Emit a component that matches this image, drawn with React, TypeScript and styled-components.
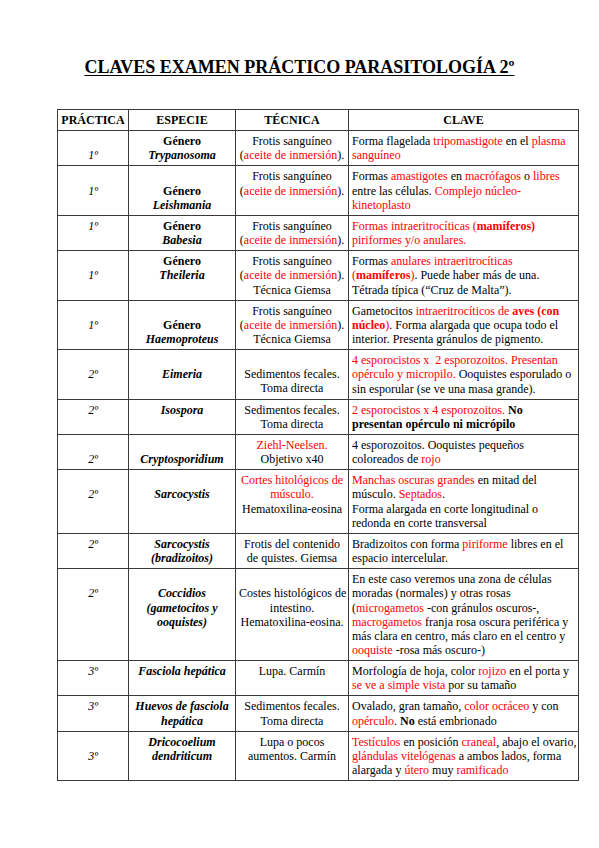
import React from 'react';
import styled, { createGlobalStyle } from 'styled-components';

const GlobalStyle = createGlobalStyle`
  html, body {
    margin: 0;
    padding: 0;
    background: #ffffff;
  }
  body {
    font-family: 'Liberation Serif', 'Times New Roman', serif;
    color: #000000;
  }
`;

const LINE = 14.15;

const Page = styled.div`
  width: 599px;
  min-height: 848px;
  padding-top: 57px;
  box-sizing: border-box;
`;

const Title = styled.h1`
  margin: 0 0 31px;
  text-align: center;
  font-size: 18px;
  font-weight: bold;
  text-decoration: underline;
  text-underline-offset: 2px;
`;

const Table = styled.table`
  margin-left: 57px;
  width: 521px;
  border-collapse: collapse;
  table-layout: fixed;
  font-size: 12px;
  line-height: ${LINE}px;
`;

const HeadCell = styled.th`
  border: 1px solid #3a3a3a;
  padding: 3px 2px;
  font-weight: bold;
  text-align: center;
  vertical-align: middle;
`;

const Cell = styled.td<{ $left?: boolean; $skip?: number }>`
  border: 1px solid #3a3a3a;
  padding: ${(p) => 3 + (p.$skip || 0) * LINE}px 3px 3px;
  vertical-align: top;
  text-align: ${(p) => (p.$left ? 'left' : 'center')};
  white-space: nowrap;
`;

const Practica = styled(Cell)`
  font-style: italic;
`;

const Especie = styled(Cell)`
  font-weight: bold;
  font-style: italic;
`;

const Genero = styled.span`
  font-style: normal;
`;

const Red = styled.span`
  color: #ff0000;
`;

const B = styled.b`
  font-weight: bold;
`;

const Aceite = () => (
  <>
    (<Red>aceite de inmersión</Red>).
  </>
);

export default function App() {
  return (
    <Page>
      <GlobalStyle />
      <Title>CLAVES EXAMEN PRÁCTICO PARASITOLOGÍA 2º</Title>
      <Table>
        <colgroup>
          <col style={{ width: 71 }} />
          <col style={{ width: 107 }} />
          <col style={{ width: 113 }} />
          <col style={{ width: 230 }} />
        </colgroup>
        <thead>
          <tr>
            <HeadCell>PRÁCTICA</HeadCell>
            <HeadCell>ESPECIE</HeadCell>
            <HeadCell>TÉCNICA</HeadCell>
            <HeadCell>CLAVE</HeadCell>
          </tr>
        </thead>
        <tbody>
          <tr>
            <Practica $skip={1}>1º</Practica>
            <Especie>
              <Genero>Género</Genero>
              <br />
              Trypanosoma
            </Especie>
            <Cell>
              Frotis sanguíneo
              <br />
              <Aceite />
            </Cell>
            <Cell $left>
              Forma flagelada <Red>tripomastigote</Red> en el <Red>plasma</Red>
              <br />
              <Red>sanguíneo</Red>
            </Cell>
          </tr>
          <tr>
            <Practica $skip={1}>1º</Practica>
            <Especie $skip={1}>
              <Genero>Género</Genero>
              <br />
              Leishmania
            </Especie>
            <Cell>
              Frotis sanguíneo
              <br />
              <Aceite />
            </Cell>
            <Cell $left>
              Formas <Red>amastigotes</Red> en <Red>macrófagos</Red> o <Red>libres</Red>
              <br />
              entre las células. <Red>Complejo núcleo-</Red>
              <br />
              <Red>kinetoplasto</Red>
            </Cell>
          </tr>
          <tr>
            <Practica>1º</Practica>
            <Especie>
              <Genero>Género</Genero>
              <br />
              Babesia
            </Especie>
            <Cell>
              Frotis sanguíneo
              <br />
              <Aceite />
            </Cell>
            <Cell $left>
              <Red>
                Formas intraeritrocíticas (<B>mamíferos)</B>
                <br />
                piriformes y/o anulares.
              </Red>
            </Cell>
          </tr>
          <tr>
            <Practica $skip={1}>1º</Practica>
            <Especie>
              <Genero>Género</Genero>
              <br />
              Theileria
            </Especie>
            <Cell>
              Frotis sanguíneo
              <br />
              <Aceite />
              <br />
              Técnica Giemsa
            </Cell>
            <Cell $left>
              Formas <Red>anulares intraeritrocíticas</Red>
              <br />
              <Red>
                (<B>mamíferos</B>)
              </Red>
              . Puede haber más de una.
              <br />
              Tétrada típica (“Cruz de Malta”).
            </Cell>
          </tr>
          <tr>
            <Practica $skip={1}>1º</Practica>
            <Especie $skip={1}>
              <Genero>Género</Genero>
              <br />
              Haemoproteus
            </Especie>
            <Cell>
              Frotis sanguíneo
              <br />
              <Aceite />
              <br />
              Técnica Giemsa
            </Cell>
            <Cell $left>
              Gametocitos <Red>intraeritrocíticos de <B>aves (con</B></Red>
              <br />
              <Red>
                <B>núcleo</B>)
              </Red>
              . Forma alargada que ocupa todo el
              <br />
              interior. Presenta gránulos de pigmento.
            </Cell>
          </tr>
          <tr>
            <Practica $skip={1}>2º</Practica>
            <Especie $skip={1}>Eimeria</Especie>
            <Cell $skip={1}>
              Sedimentos fecales.
              <br />
              Toma directa
            </Cell>
            <Cell $left>
              <Red>4 esporocistos x &nbsp;2 esporozoitos. Presentan</Red>
              <br />
              <Red>opérculo y micropilo.</Red> Ooquistes esporulado o
              <br />
              sin esporular (se ve una masa grande).
            </Cell>
          </tr>
          <tr>
            <Practica>2º</Practica>
            <Especie>Isospora</Especie>
            <Cell>
              Sedimentos fecales.
              <br />
              Toma directa
            </Cell>
            <Cell $left>
              <Red>2 esporocistos x 4 esporozoitos.</Red> <B>No</B>
              <br />
              <B>presentan opérculo ni micrópilo</B>
            </Cell>
          </tr>
          <tr>
            <Practica $skip={1}>2º</Practica>
            <Especie $skip={1}>Cryptosporidium</Especie>
            <Cell>
              <Red>Ziehl-Neelsen.</Red>
              <br />
              Objetivo x40
            </Cell>
            <Cell $left>
              4 esporozoitos. Ooquistes pequeños
              <br />
              coloreados de <Red>rojo</Red>
            </Cell>
          </tr>
          <tr>
            <Practica $skip={1}>2º</Practica>
            <Especie $skip={1}>Sarcocystis</Especie>
            <Cell>
              <Red>
                Cortes hitológicos de
                <br />
                músculo.
              </Red>
              <br />
              Hematoxilina-eosina
            </Cell>
            <Cell $left>
              <Red>Manchas oscuras grandes</Red> en mitad del
              <br />
              músculo. <Red>Septados</Red>.
              <br />
              Forma alargada en corte longitudinal o
              <br />
              redonda en corte transversal
            </Cell>
          </tr>
          <tr>
            <Practica>2º</Practica>
            <Especie>
              Sarcocystis
              <br />
              (bradizoitos)
            </Especie>
            <Cell>
              Frotis del contenido
              <br />
              de quistes. Giemsa
            </Cell>
            <Cell $left>
              Bradizoitos con forma <Red>piriforme</Red> libres en el
              <br />
              espacio intercelular.
            </Cell>
          </tr>
          <tr>
            <Practica $skip={1}>2º</Practica>
            <Especie $skip={1}>
              Coccidios
              <br />
              (gametocitos y
              <br />
              ooquistes)
            </Especie>
            <Cell $skip={1}>
              Costes histológicos de
              <br />
              intestino.
              <br />
              Hematoxilina-eosina.
            </Cell>
            <Cell $left>
              En este caso veremos una zona de células
              <br />
              moradas (normales) y otras rosas
              <br />
              (<Red>microgametos</Red> -con gránulos oscuros-,
              <br />
              <Red>macrogametos</Red> franja rosa oscura periférica y
              <br />
              más clara en centro, más claro en el centro y
              <br />
              <Red>ooquiste</Red> -rosa más oscuro-)
            </Cell>
          </tr>
          <tr>
            <Practica>3º</Practica>
            <Especie>Fasciola hepática</Especie>
            <Cell>Lupa. Carmín</Cell>
            <Cell $left>
              Morfología de hoja, color <Red>rojizo</Red> en el porta y
              <br />
              <Red>se ve a simple vista</Red> por su tamaño
            </Cell>
          </tr>
          <tr>
            <Practica>3º</Practica>
            <Especie>
              Huevos de fasciola
              <br />
              hepática
            </Especie>
            <Cell>
              Sedimentos fecales.
              <br />
              Toma directa
            </Cell>
            <Cell $left>
              Ovalado, gran tamaño, <Red>color ocráceo</Red> y con
              <br />
              <Red>opérculo</Red>. <B>No</B> está embrionado
            </Cell>
          </tr>
          <tr>
            <Practica $skip={1}>3º</Practica>
            <Especie>
              Dricocoelium
              <br />
              dendriticum
            </Especie>
            <Cell>
              Lupa o pocos
              <br />
              aumentos. Carmín
            </Cell>
            <Cell $left>
              <Red>Testículos</Red> en posición <Red>craneal</Red>, abajo el ovario,
              <br />
              <Red>glándulas vitelógenas</Red> a ambos lados, forma
              <br />
              alargada y <Red>útero</Red> muy <Red>ramificado</Red>
            </Cell>
          </tr>
        </tbody>
      </Table>
    </Page>
  );
}
